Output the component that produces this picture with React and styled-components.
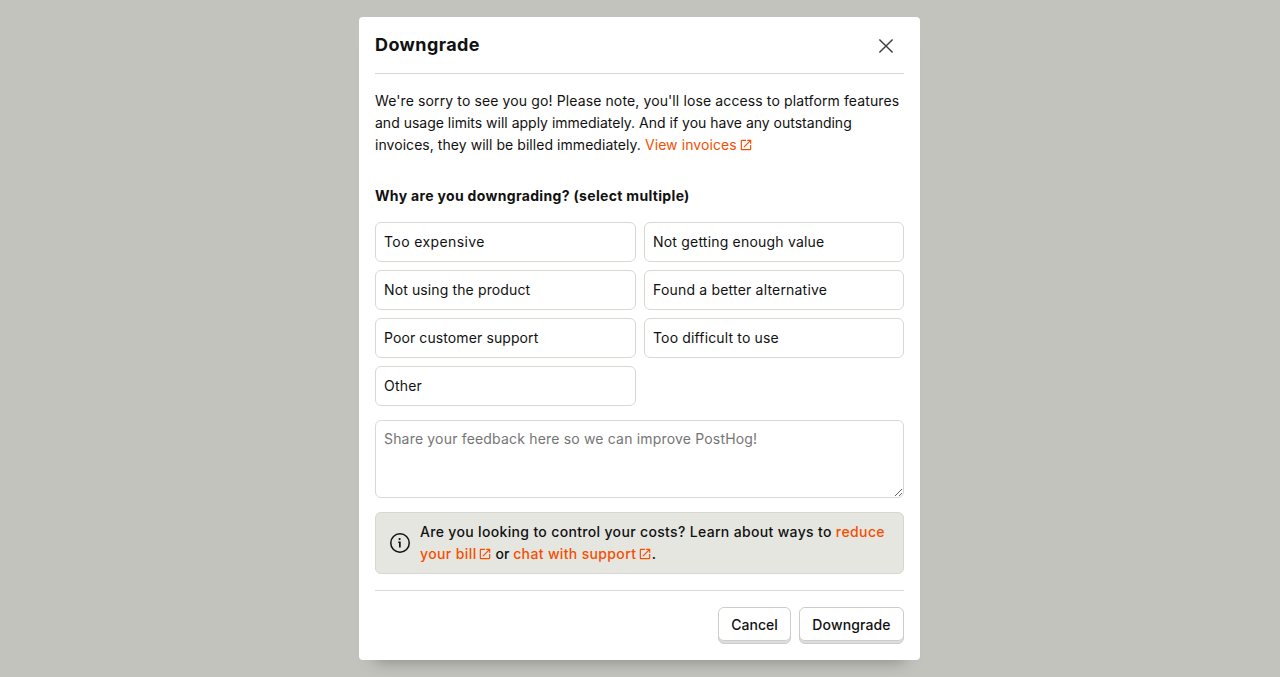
import React from 'react';
import styled, { createGlobalStyle } from 'styled-components';

const Global = createGlobalStyle`
  *, *::before, *::after { box-sizing: border-box; }
  body { margin: 0; background: #c2c3bd; color: #111; font: 400 14px/22px Inter, sans-serif; }
  p, h2, h3 { margin: 0; }
`;
const Overlay = styled.div`
  height: 100vh; display: flex; align-items: flex-start; justify-content: center; padding: 17px 1px 0 0;
`;
const Modal = styled.div`
  width: 561px; height: 643px; background: #fff; border-radius: 4px; padding: 0 16px;
  box-shadow: 0 16px 16px -16px rgba(0,0,0,.35);
  display: flex; flex-direction: column;
`;
const Header = styled.header`
  height: 57px; flex: none; border-bottom: 1px solid #d5d5d5; display: flex; justify-content: space-between; padding: 16px 8px 0 0;
`;
const Title = styled.h2`font-size: 18px; line-height: 24px; font-weight: 700; letter-spacing: .4px;`;
const Close = styled.button`
  border: 0; background: none; padding: 3px 0 0; width: 20px; height: 23px; color: #3c3c3c;
  svg { display: block; }
`;
const Intro = styled.p`margin-top: 16px; white-space: nowrap;`;
const Text = styled.span`letter-spacing: ${p => p.$track}px;`;
const Link = styled.a`
  color: #f54e00; letter-spacing: ${p => p.$track}px;
  svg { width: 14px; height: 14px; margin-left: ${p => p.$gap ?? 2}px; vertical-align: -2px; }
`;
const Question = styled.h3`font-size: 14px; line-height: 22px; font-weight: 700; margin-top: 29px; letter-spacing: .325px;`;
const Options = styled.div`display: grid; grid-template-columns: 261px 260px; gap: 8px; margin-top: 15px;`;
const Option = styled.label`
  height: 40px; border: 1px solid #d9d9d3; border-radius: 6px; padding: 8px; line-height: 22px; letter-spacing: ${p => p.$track}px;
`;
const Feedback = styled.textarea`
  display: block; width: 100%; height: 78px; flex: none; margin-top: 14px; border: 1px solid #d9d9d3; border-radius: 6px;
  padding: 8px; font: 400 14px/20px Inter, sans-serif; letter-spacing: .18px; resize: vertical; outline: 0;
  &::placeholder { color: #757575; }
`;
const Banner = styled.div`
  height: 62px; flex: none; margin-top: 14px; border: 1px solid #d5d7d0; border-radius: 6px; background: #e5e6e0;
  display: flex; align-items: center; gap: 8px; padding: 0 12px; font-weight: 500; white-space: nowrap;
  > svg { flex: none; }
`;
const Footer = styled.footer`
  border-top: 1px solid #d9d9d3; margin-top: 16px; padding-top: 16px; display: flex; justify-content: flex-end; align-items: flex-start; gap: 8px;
`;
const ButtonBase = styled.button`
  width: ${p => p.$width}px; height: 37px; padding: 0; border: 1px solid #ccc; border-radius: 6px;
  background: #e0dcdc; color: #111; font: 500 14px/20px Inter, sans-serif; letter-spacing: ${p => p.$track}px;
`;
const ButtonFace = styled.span`
  display: block; height: 33px; margin-bottom: 2px; padding-top: 7px; background: #fff; border-bottom: 1px solid #ccc; border-radius: 5px;
`;
const Button = ({ width, track, children }) => (
  <ButtonBase $width={width} $track={track}><ButtonFace>{children}</ButtonFace></ButtonBase>
);
const External = () => (
  <svg viewBox="0 0 24 24" fill="currentColor"><path d="M19 19H5V5h7V3H5a2 2 0 0 0-2 2v14a2 2 0 0 0 2 2h14c1.1 0 2-.9 2-2v-7h-2zM14 3v2h3.59l-9.83 9.83 1.41 1.41L19 6.41V10h2V3z" /></svg>
);
const reasons = [
  ['Too expensive', 0.4], ['Not getting enough value', 0.2],
  ['Not using the product', 0.12], ['Found a better alternative', 0.19],
  ['Poor customer support', 0.1], ['Too difficult to use', 0.15], ['Other', 0.2],
];

export default function App() {
  return (
    <Overlay>
      <Global />
      <Modal>
        <Header>
          <Title>Downgrade</Title>
          <Close aria-label="close"><svg width="20" height="20" viewBox="0 0 20 20" fill="none" stroke="currentColor" strokeWidth="1.4"><path d="M3.4 3.4l13.2 13.2M16.6 3.4L3.4 16.6" /></svg></Close>
        </Header>
        <Intro>
          <Text $track={0.117}>We're sorry to see you go! Please note, you'll lose access to platform features</Text><br />
          <Text $track={0}>and usage limits will apply immediately. And if you have any outstanding</Text><br />
          <Text $track={0.05}>invoices, they will be billed immediately. </Text><Link $track={0.08}>View invoices<External /></Link>
        </Intro>
        <Question>Why are you downgrading? (select multiple)</Question>
        <Options>{reasons.map(([label, track]) => <Option key={label} $track={track}>{label}</Option>)}</Options>
        <Feedback placeholder="Share your feedback here so we can improve PostHog!" />
        <Banner>
          <svg width="24" height="24" viewBox="0 0 24 24" fill="none" stroke="#111" strokeWidth="1.5"><circle cx="12" cy="12" r="9.25" /><path d="M10.25 11.25h1.6v5.25" strokeWidth="1.7" /><circle cx="11.6" cy="8.1" r="1.1" fill="#111" stroke="none" /></svg>
          <p>
            <Text $track={0.335}>Are you looking to control your costs? Learn about ways to </Text><Link $track={0.4} $gap={1.2}>reduce<br />your bill<External /></Link> or <Link $track={0.35} $gap={1.5}>chat with support<External /></Link>.
          </p>
        </Banner>
        <Footer><Button width={73} track={0}>Cancel</Button><Button width={105} track={0.12}>Downgrade</Button></Footer>
      </Modal>
    </Overlay>
  );
}
